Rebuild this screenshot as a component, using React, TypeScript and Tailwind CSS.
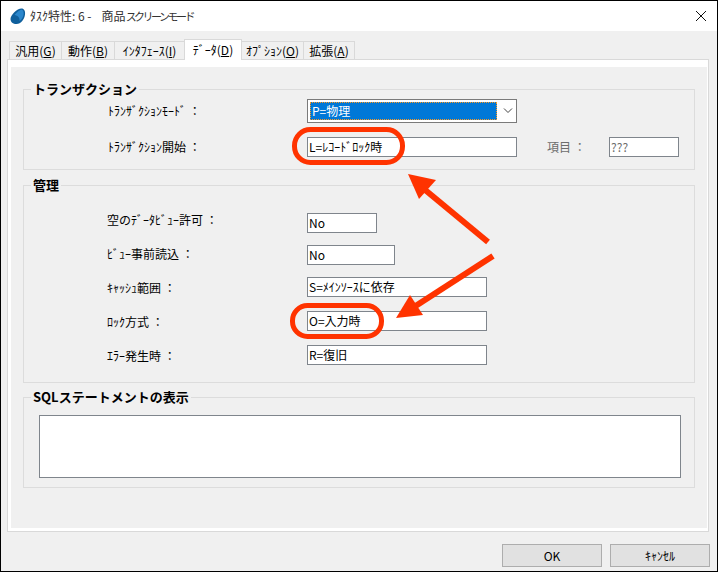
import React from 'react';

const FONT = "font-['Noto_Sans_CJK_JP','Noto_Sans',sans-serif]";

const tabs = [
  { before: '汎用(', key: 'G', width: 'w-[53px]' },
  { before: '動作(', key: 'B', width: 'w-[54px]' },
  { before: 'ｲﾝﾀﾌｪｰｽ(', key: 'I', width: 'w-[71px]' },
  { before: 'ﾃﾞｰﾀ(', key: 'D', width: 'w-[58px]', active: true },
  { before: 'ｵﾌﾟｼｮﾝ(', key: 'O', width: 'w-[63px]' },
  { before: '拡張(', key: 'A', width: 'w-[52px]' },
];

const manageRows = [
  { label: '空のﾃﾞｰﾀﾋﾞｭｰ許可 ：', value: 'No', gap: 'mt-[18px]', width: 'w-[70px]', nudge: '-translate-y-[3px]' },
  { label: 'ﾋﾞｭｰ事前読込 ：', value: 'No', gap: 'mt-[12px]', width: 'w-[88px]', nudge: '-translate-y-px' },
  { label: 'ｷｬｯｼｭ範囲 ：', value: 'S=ﾒｲﾝｿｰｽに依存', gap: 'mt-[12px]', width: 'w-[180px]', nudge: 'translate-y-px' },
  { label: 'ﾛｯｸ方式 ：', value: 'O=入力時', gap: 'mt-[14px]', width: 'w-[180px]', nudge: 'translate-y-px' },
  { label: 'ｴﾗｰ発生時 ：', value: 'R=復旧', gap: 'mt-[14px]', width: 'w-[180px]', nudge: 'translate-y-px' },
];

const Field = ({ value, className }: { value: string; className: string }) => (
  <div className={`h-[20px] shrink-0 border border-[#7f858c] bg-white pl-px text-[12px] leading-[18px] whitespace-nowrap text-black ${className}`}>
    {value}
  </div>
);

const Group = ({ title, className, children }: { title: string; className: string; children: React.ReactNode }) => (
  <fieldset className={`ml-[12px] w-[672px] border border-[#dcdcdc] ${className}`}>
    <legend className="ml-[7px] h-[20px] px-[2px] text-[13px] leading-[20px] font-bold text-black">{title}</legend>
    {children}
  </fieldset>
);

const App: React.FC = () => {
  return (
    <div className={`relative flex h-[572px] w-[718px] flex-col overflow-hidden border border-black bg-[#f0f0f0] ${FONT}`}>
      <div className="flex h-[30px] shrink-0 items-center bg-white pr-[10px] pl-[9px]">
        <svg width="16" height="17" viewBox="0 0 16 17">
          <path d="M11.5 0.5C14 0.5 15.5 3 15 6.5C14.5 11 11 16 6.5 16C3 16 0.5 14 0.5 11C0.5 7 7 0.5 11.5 0.5Z" fill="#0f5f9c" />
          <path d="M11.5 1.5C13.5 2 14 4.5 13.5 7C13 9.5 11.5 12 9.5 13C10 9.5 8 7.5 4.5 7C7 4 9.5 2 11.5 1.5Z" fill="#2a86cc" />
        </svg>
        <span className="ml-[4px] text-[12px] whitespace-nowrap text-[#333]">
          ﾀｽｸ特性: 6 -&nbsp;&nbsp;&nbsp;
          <span className="ml-[2px]">商品</span>
          <span className="text-[11px] tracking-[-2.5px]">スクリーンモード</span>
        </span>
        <svg className="ml-auto" width="12" height="12" viewBox="0 0 12 12" stroke="#111" strokeWidth="1" fill="none">
          <path d="M1 1L11 11M11 1L1 11" />
        </svg>
      </div>

      <div className="mt-[8px] flex h-[20px] shrink-0 items-end pl-[8px]">
        {tabs.map(tab => (
          <div
            key={tab.key}
            className={`${tab.width} -mr-px flex items-center justify-center border border-b-0 border-[#d9d9d9] text-[12px] whitespace-nowrap text-black ${
              tab.active ? 'relative z-10 -mb-px h-[21px] bg-white' : 'h-[18px] bg-[#f0f0f0]'
            }`}
          >
            {tab.before}
            <span className="underline">{tab.key}</span>)
          </div>
        ))}
      </div>

      <div className="ml-[6px] h-[473px] w-[702px] shrink-0 border border-[#d9d9d9] bg-white pt-[7px] pr-px pb-[3px] pl-[3px]">
        <div className="flex h-full flex-col bg-[#f0f0f0] pt-[12px]">
          <Group title="トランザクション" className="h-[91px]">
            <div className="flex h-[24px] items-center pl-[84px]">
              <span className="w-[199px] shrink-0 text-[12px] whitespace-nowrap text-black">ﾄﾗﾝｻﾞｸｼｮﾝﾓｰﾄﾞ ：</span>
              <div className="flex h-[24px] w-[210px] items-center border border-[#7a7a7a] bg-white pl-[2px]">
                <div className="h-[18px] w-[187px] border border-dotted border-[#ff9a1f] bg-[#0078d7] pl-px text-[12px] leading-[16px] text-white">P=物理</div>
                <svg className="ml-[6px]" width="10" height="6" viewBox="0 0 10 6" fill="none" stroke="#444" strokeWidth="1">
                  <path d="M1 0.5L5 4.5L9 0.5" />
                </svg>
              </div>
            </div>
            <div className="mt-[14px] flex h-[20px] items-center pl-[84px]">
              <span className="w-[199px] shrink-0 text-[12px] whitespace-nowrap text-black">ﾄﾗﾝｻﾞｸｼｮﾝ開始 ：</span>
              <Field value="L=ﾚｺｰﾄﾞﾛｯｸ時" className="w-[210px]" />
              <span className="ml-[30px] w-[62px] shrink-0 text-[12px] whitespace-nowrap text-[#6d6d6d]">項目 ：</span>
              <div className="h-[20px] w-[70px] border border-[#7f858c] bg-white pl-px text-[12px] leading-[18px] text-[#6d6d6d]">???</div>
            </div>
          </Group>

          <Group title="管理" className="mt-[5px] h-[208px]">
            {manageRows.map(row => (
              <div key={row.label} className={`${row.gap} flex h-[20px] items-center pl-[83px]`}>
                <span className={`w-[200px] shrink-0 text-[12px] whitespace-nowrap text-black ${row.nudge}`}>{row.label}</span>
                <Field value={row.value} className={row.width} />
              </div>
            ))}
          </Group>

          <Group title="SQLステートメントの表示" className="mt-[4px] h-[101px]">
            <div className="mt-[8px] ml-[15px] h-[63px] w-[642px] border border-[#7f858c] bg-white" />
          </Group>
        </div>
      </div>

      <div className="flex justify-end gap-[8px] pt-[12px] pr-[7px]">
        <div className="flex h-[23px] w-[100px] items-center justify-center border border-[#adadad] bg-[#e1e1e1] text-[12px] text-black">OK</div>
        <div className="flex h-[23px] w-[100px] items-center justify-center border border-[#adadad] bg-[#e1e1e1] text-[12px] text-black">ｷｬﾝｾﾙ</div>
      </div>

      {/* red annotations drawn on top of the captured dialog */}
      <svg className="pointer-events-none absolute top-[-1px] left-[-1px]" width="718" height="572" viewBox="0 0 718 572" fill="none">
        <rect x="294.5" y="129.5" width="108" height="33" rx="16" stroke="#ff3300" strokeWidth="5" />
        <rect x="292.5" y="305.5" width="89" height="31" rx="15" stroke="#ff3300" strokeWidth="5" />
        <path d="M488 242L424 189" stroke="#ff3300" strokeWidth="6" />
        <path d="M408 174L436 180L419 199Z" fill="#ff3300" />
        <path d="M493 256L414 307" stroke="#ff3300" strokeWidth="6" />
        <path d="M396 318L410 295L423 315Z" fill="#ff3300" />
      </svg>
    </div>
  );
};

export default App;
